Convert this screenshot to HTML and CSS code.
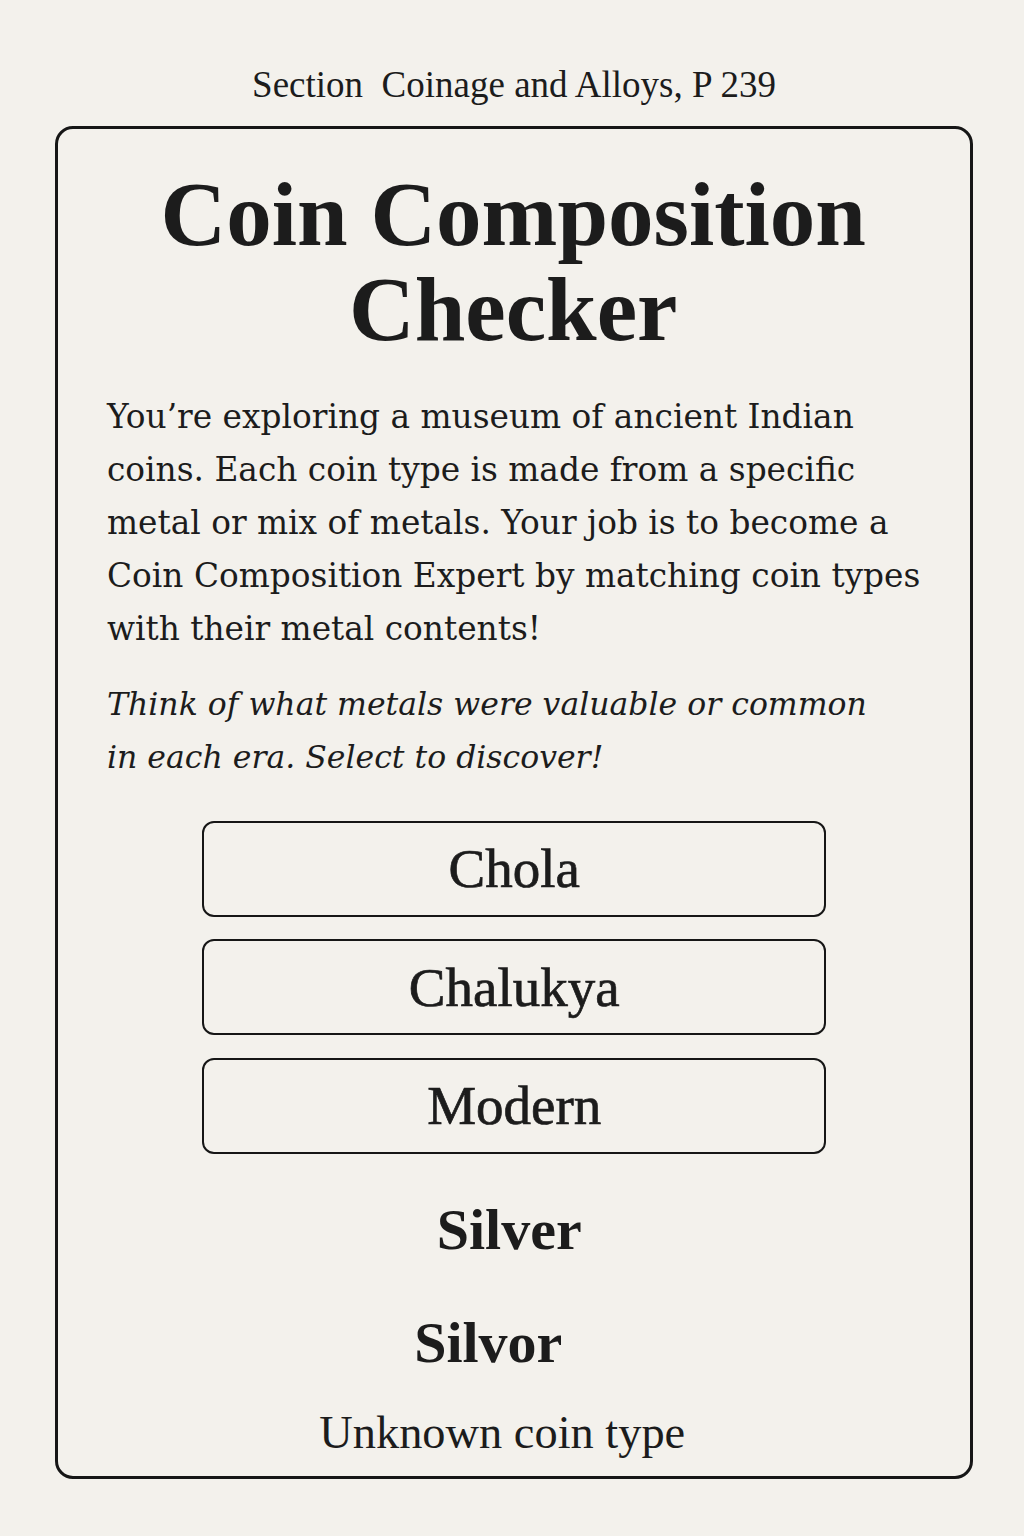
FILE: index.html
```html
<!DOCTYPE html>
<html lang="en">
<head>
<meta charset="utf-8">
<title>Coin Composition Checker</title>
<link rel="stylesheet" href="styles.css">
</head>
<body>
<div class="page">
  <p class="section-label">Section&nbsp; Coinage and Alloys, P 239</p>
  <main class="card">
    <h1 class="title">Coin Composition Checker</h1>
    <p class="intro">You’re exploring a museum of ancient Indian coins. Each coin type is made from a specific metal or mix of metals. Your job is to become a Coin Composition Expert by matching coin types with their metal contents!</p>
    <p class="hint">Think of what metals were valuable or common in each era. Select to discover!</p>
    <div class="choices">
      <button class="choice">Chola</button>
      <button class="choice">Chalukya</button>
      <button class="choice">Modern</button>
    </div>
    <p class="result result-main">Silver</p>
    <p class="result result-alt">Silvor</p>
    <p class="status">Unknown coin type</p>
  </main>
</div>
</body>
</html>
```

FILE: styles.css
```css
html, body {
  margin: 0;
  padding: 0;
  background: #f3f1ec;
}
body {
  font-family: "Liberation Serif", "DejaVu Serif", serif;
  color: #1c1c1c;
}
.page {
  width: 1024px;
  height: 1536px;
  box-sizing: border-box;
  padding-top: 63px;
}
.section-label {
  margin: 0 0 19px;
  text-align: center;
  font-size: 37px;
  line-height: 44px;
  padding-left: 4px;
}
.card {
  margin: 0 51px 0 55px;
  height: 1353px;
  box-sizing: border-box;
  border: 3px solid #161616;
  border-radius: 18px;
  padding: 37.5px 39.5px 0 49px;
  display: flex;
  flex-direction: column;
}
.title {
  margin: 0 auto;
  max-width: 740px;
  text-align: center;
  font-size: 91px;
  line-height: 95px;
  font-weight: 700;
  padding-right: 11px;
}
.intro {
  margin: 34px 0 0;
  font-family: "DejaVu Serif", serif;
  font-size: 32.8px;
  line-height: 53px;
}
.hint {
  margin: 22px 0 0;
  max-width: 782px;
  font-family: "DejaVu Serif", serif;
  font-style: italic;
  font-size: 31.5px;
  line-height: 53px;
}
.choices {
  margin-top: 37px;
  display: flex;
  flex-direction: column;
  align-items: center;
  gap: 22.5px;
  margin-left: -9px;
}
.choice {
  width: 624px;
  height: 96px;
  border: 2.7px solid #161616;
  border-radius: 12px;
  background: transparent;
  font-family: "Liberation Serif", serif;
  color: #1c1c1c;
  font-size: 55px;
  font-weight: 400;
  -webkit-text-stroke: 0.7px #1c1c1c;
  padding: 0;
}
.result {
  margin: 0;
  text-align: center;
  font-weight: 700;
  font-size: 58px;
  line-height: 70px;
}
.result-main {
  margin-top: 41px;
  padding-right: 19px;
}
.result-alt {
  margin-top: 43px;
  padding-right: 61px;
}
.status {
  margin: 29px 0 0;
  text-align: center;
  font-size: 46.4px;
  line-height: 52px;
  padding-right: 33px;
}
```
